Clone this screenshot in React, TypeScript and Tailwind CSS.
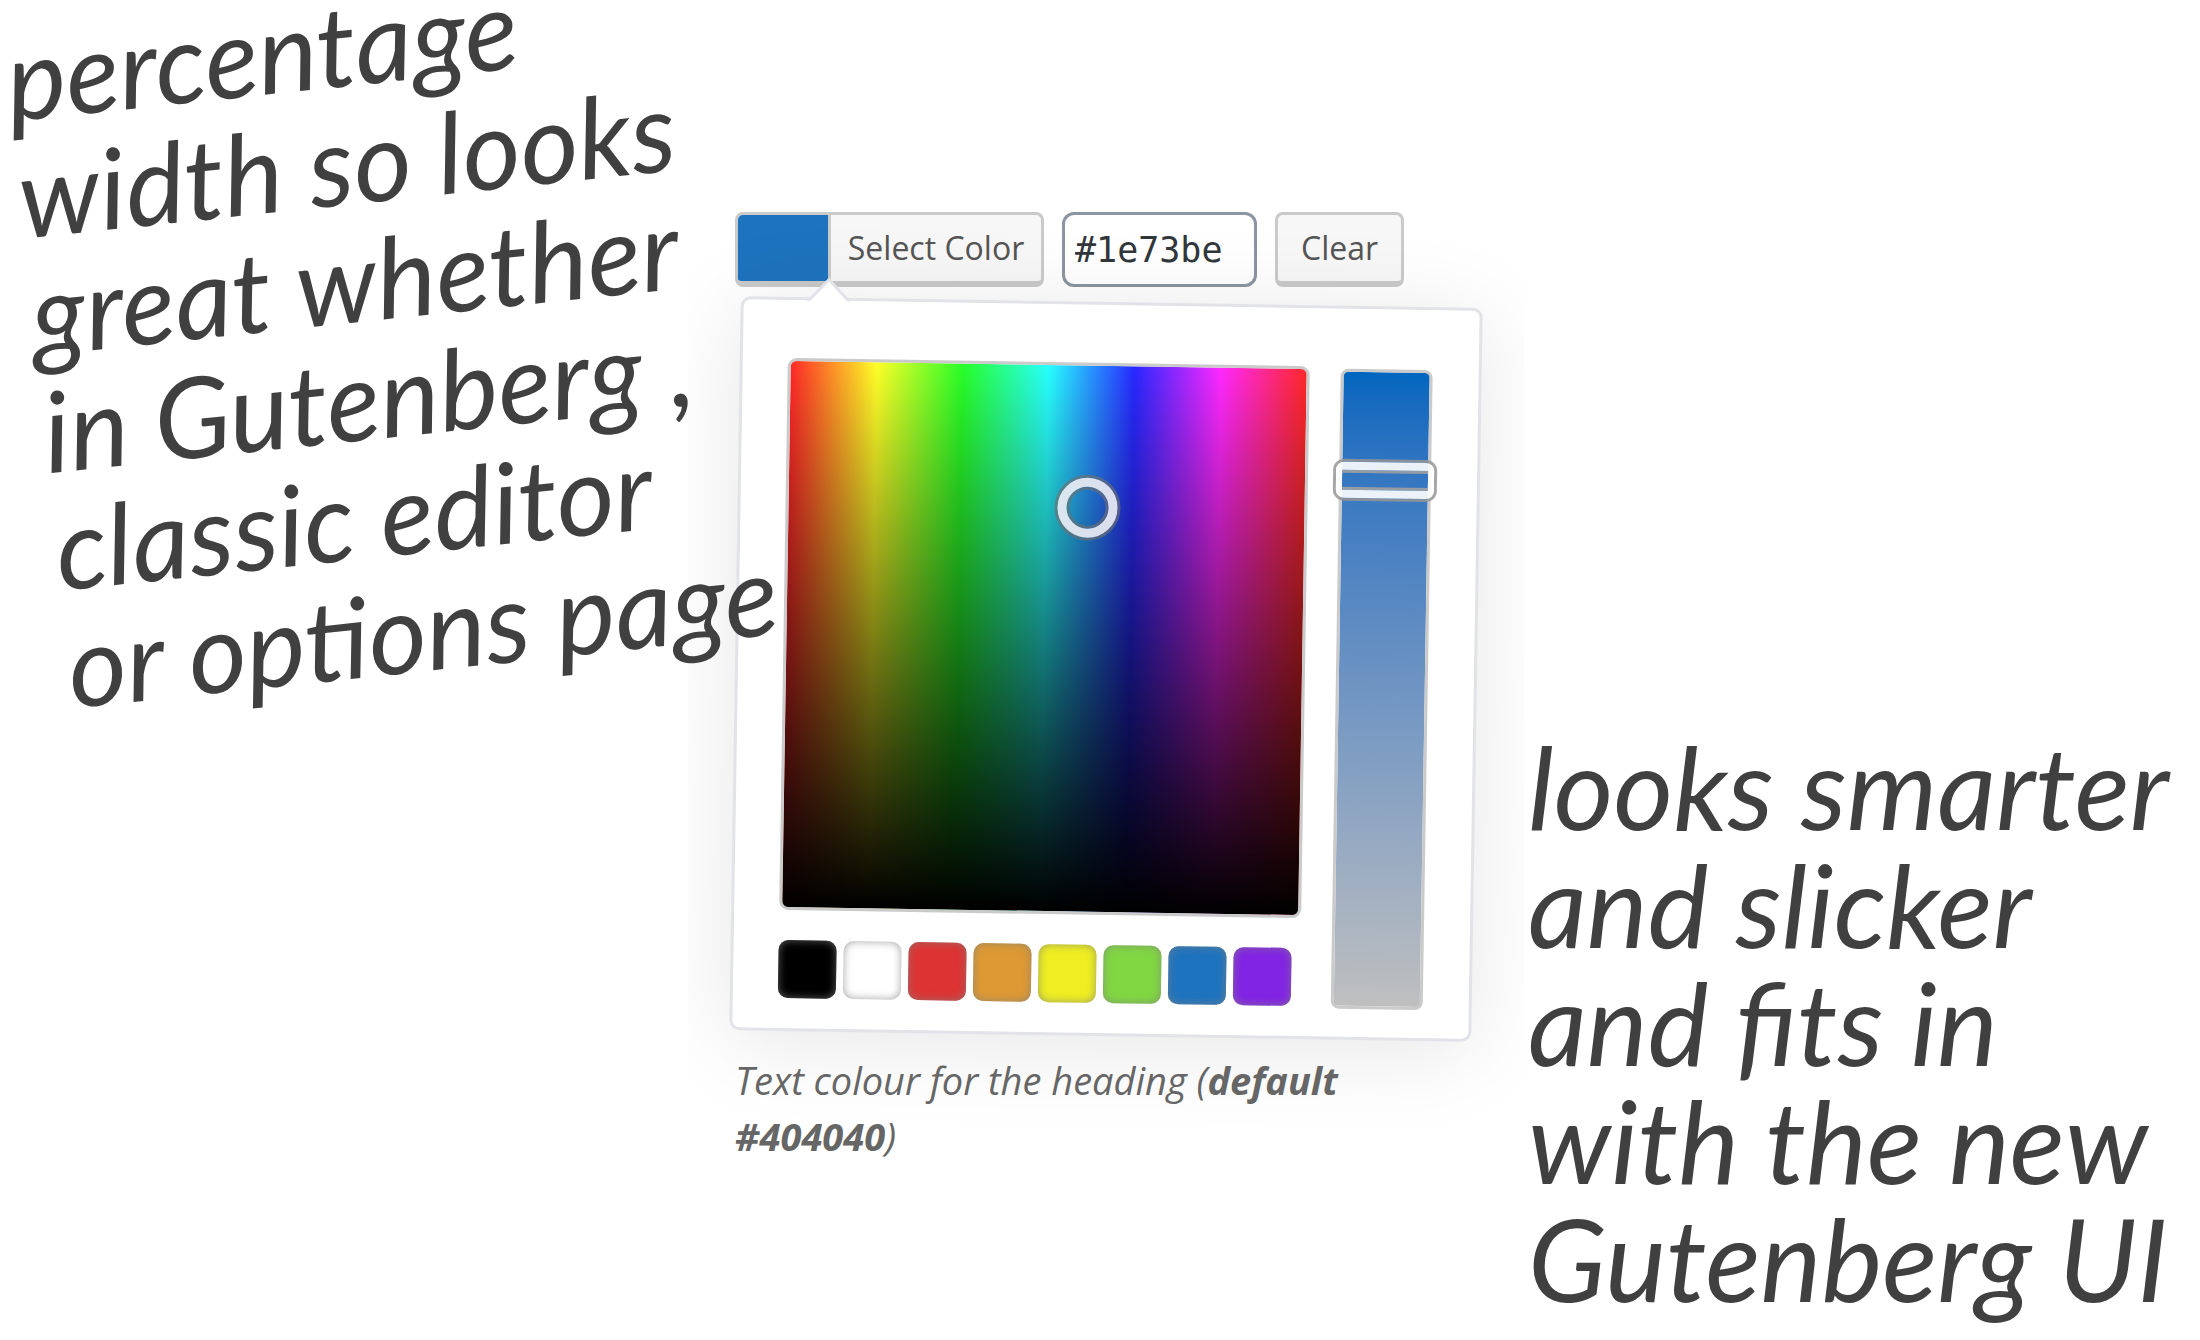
import { useState } from "react";

const leftNote = [
  "percentage",
  "width so looks",
  "great whether",
  "in Gutenberg ,",
  "classic editor",
  "or options page",
];

const rightNote = [
  "looks smarter",
  "and slicker",
  "and fits in",
  "with the new",
  "Gutenberg UI",
];

const palette = [
  { name: "Black", className: "bg-[#000000]" },
  { name: "White", className: "bg-[#ffffff]" },
  { name: "Red", className: "bg-[#dd3333]" },
  { name: "Orange", className: "bg-[#dd9933]" },
  { name: "Yellow", className: "bg-[#eeee22]" },
  { name: "Green", className: "bg-[#81d742]" },
  { name: "Blue", className: "bg-[#1e73be]" },
  { name: "Purple", className: "bg-[#8224e3]" },
];

function Note({ lines, className }: { lines: string[]; className: string }) {
  return (
    <p
      className={`whitespace-nowrap font-['Lato',sans-serif] leading-[118px] text-[#404040] italic ${className}`}
    >
      {lines.map((line) => (
        <span key={line} className="block">
          {line}
        </span>
      ))}
    </p>
  );
}

function Toolbar({ value, onChange }: { value: string; onChange: (v: string) => void }) {
  return (
    <div className="flex h-[75px] gap-[18px]">
      <button
        type="button"
        className="flex w-[309px] overflow-hidden rounded-lg border-3 border-b-6 border-[#cacaca] bg-[#f7f7f7] text-[32px] text-[#555555]"
      >
        <span className="h-full w-[93px] shrink-0 border-r-3 border-[#cacaca] bg-[#1e73be]" />
        <span className="flex h-full flex-1 items-center justify-center whitespace-nowrap">
          Select Color
        </span>
      </button>
      <input
        type="text"
        aria-label="Color value"
        value={value}
        onChange={(e) => onChange(e.target.value)}
        className="w-[195px] rounded-xl border-3 border-[#8c95a1] bg-white px-[10px] pt-[2px] font-['DejaVu_Sans_Mono',monospace] text-[35px] text-[#32373c] outline-none"
      />
      <button
        type="button"
        onClick={() => onChange("")}
        className="w-[129px] rounded-lg border-3 border-b-6 border-[#cacaca] bg-[#f7f7f7] text-[32px] text-[#555555]"
      >
        Clear
      </button>
    </div>
  );
}

function Picker() {
  const [saturation, setSaturation] = useState(83);
  return (
    <div className="relative mt-[15px] rotate-[0.9deg] rounded-[10px] border-3 border-[#e2e3e8] bg-white pt-[58px] pr-[46px] pb-[28px] pl-[45px] shadow-[0_10px_90px_rgba(0,0,0,0.1)]">
      <svg
        className="absolute -top-[25px] left-[63px]"
        width="44"
        height="26"
        viewBox="0 0 44 26"
        aria-hidden="true"
      >
        <path d="M1 26 L22 4 L43 26 Z" fill="#ffffff" />
        <path d="M0 24 H3 L22 4 L41 24 H44" fill="none" stroke="#e2e3e8" strokeWidth="3" />
      </svg>
      <div className="flex items-start justify-between">
        <div className="flex w-[522px] flex-col gap-[30px]">
          <div className="relative h-[552px] rounded-[9px] border-3 border-[#cacaca] bg-[linear-gradient(to_bottom,transparent,#000),linear-gradient(to_right,#ff2828,#ffff28,#28ff28,#28ffff,#2828ff,#ff28ff,#ff2828)]">
            <button
              type="button"
              aria-label="Hue and brightness"
              className="absolute top-[26%] left-[58%] size-[60px] -translate-1/2 rounded-full border-9 border-[#ecebf2]/92 shadow-[0_0_0_3px_rgba(110,110,110,0.65),inset_0_0_0_3px_rgba(110,110,110,0.65)]"
            />
          </div>
          <div className="flex gap-[7px]">
            {palette.map((swatch) => (
              <button
                key={swatch.name}
                type="button"
                aria-label={swatch.name}
                className={`size-[58px] rounded-[10px] shadow-[inset_0_0_8px_rgba(128,128,128,0.75)] ${swatch.className}`}
              />
            ))}
          </div>
        </div>
        <div className="relative mt-[2px] h-[640px] w-[92px] rounded-lg border-3 border-[#cacaca] bg-linear-to-b from-[#0066bf] to-[#bfbfbf]">
          <div
            className="absolute inset-x-[-6px] h-[36px] -translate-y-1/2 rounded-[8px] border-x-6 border-y-8 border-white/90 shadow-[0_0_0_3px_rgba(150,150,150,0.85),inset_0_3px_0_rgba(160,160,160,0.9),inset_0_-3px_0_rgba(160,160,160,0.9)]"
            style={{ top: `${100 - saturation}%` }}
          />
          <input
            type="range"
            aria-label="Saturation"
            min={0}
            max={100}
            value={saturation}
            onChange={(e) => setSaturation(Number(e.target.value))}
            className="absolute inset-0 size-full cursor-pointer opacity-0 [direction:rtl] [writing-mode:vertical-lr]"
          />
        </div>
      </div>
    </div>
  );
}

export default function App() {
  const [value, setValue] = useState("#1e73be");
  return (
    <main className="grid min-h-screen grid-cols-[688fr_836fr_676fr] overflow-hidden bg-white font-['Open_Sans',sans-serif]">
      <div className="z-10 min-w-0 pt-5">
        <Note lines={leftNote} className="origin-top-left -rotate-6 text-[112px]" />
      </div>
      <section className="min-w-0 overflow-x-clip px-[47px] pt-[212px]">
        <Toolbar value={value} onChange={setValue} />
        <Picker />
        <p className="relative mt-4 text-[38px] leading-[56px] text-[#666666] italic">
          Text colour for the heading (<strong className="font-bold">default #404040</strong>)
        </p>
      </section>
      <div className="min-w-0 self-end pb-6 pl-1">
        <Note lines={rightNote} className="text-[115px]" />
      </div>
    </main>
  );
}
